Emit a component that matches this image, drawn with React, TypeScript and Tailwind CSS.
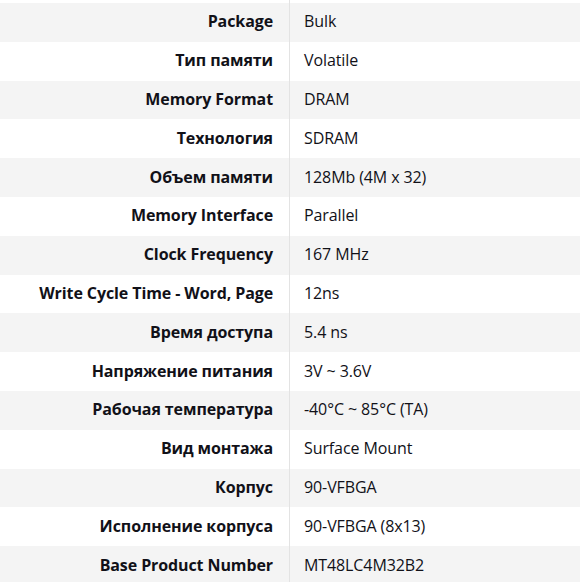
import React from 'react';

const rows: [string, string][] = [
  ['Package', 'Bulk'],
  ['Тип памяти', 'Volatile'],
  ['Memory Format', 'DRAM'],
  ['Технология', 'SDRAM'],
  ['Объем памяти', '128Mb (4M x 32)'],
  ['Memory Interface', 'Parallel'],
  ['Clock Frequency', '167 MHz'],
  ['Write Cycle Time - Word, Page', '12ns'],
  ['Время доступа', '5.4 ns'],
  ['Напряжение питания', '3V ~ 3.6V'],
  ['Рабочая температура', '-40°C ~ 85°C (TA)'],
  ['Вид монтажа', 'Surface Mount'],
  ['Корпус', '90-VFBGA'],
  ['Исполнение корпуса', '90-VFBGA (8x13)'],
  ['Base Product Number', 'MT48LC4M32B2'],
];

const App: React.FC = () => {
  return (
    <div className="w-[580px] bg-white text-[16px] text-[#111118]" style={{ fontFamily: '"Open Sans", "Noto Sans", sans-serif' }}>
      <div className="grid grid-cols-[290px_1fr] h-[3px]">
        <div className="border-r border-[#e3e3e3]" />
        <div />
      </div>
      {rows.map(([label, value], i) => (
        <div
          key={label}
          className={`grid grid-cols-[290px_1fr] h-[38.8px] items-center ${i % 2 === 0 ? 'bg-[#f4f4f4]' : 'bg-white'}`}
        >
          <div className="h-full flex items-center justify-end pr-[16px] pb-[2px] border-r border-[#e3e3e3] font-bold tracking-[-0.1px]">
            {label}
          </div>
          <div className="pl-[14px] pb-[2px] tracking-[-0.1px]">{value}</div>
        </div>
      ))}
    </div>
  );
};

export default App;
